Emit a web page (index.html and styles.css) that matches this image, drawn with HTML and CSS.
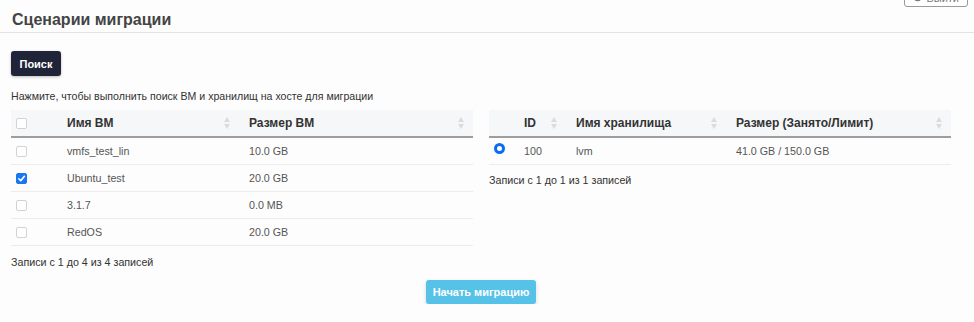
FILE: index.html
```html
<!DOCTYPE html>
<html lang="ru">
<head>
    <meta charset="UTF-8">
    <meta name="viewport" content="width=device-width, initial-scale=1.0">
    <title>Сценарии миграции</title>
    <link rel="stylesheet" href="styles.css">
</head>
<body>
    <!-- Page Header -->
    <div class="page-header">
        <h2>Сценарии миграции</h2>
        <button type="button" class="btn-logout">
            <svg width="9" height="9" viewBox="0 0 10 10"><circle cx="5" cy="5" r="3.6" fill="none" stroke="#777" stroke-width="1.4"/></svg>
            Выйти
        </button>
    </div>

    <div class="content">
        <button type="button" class="btn-search">Поиск</button>
        <p class="hint">Нажмите, чтобы выполнить поиск ВМ и хранилищ на хосте для миграции</p>

        <div class="tables">
            <!-- VM list -->
            <div class="table-block">
                <table class="data-table">
                    <colgroup>
                        <col style="width: 46px">
                        <col style="width: 182px">
                        <col>
                    </colgroup>
                    <thead>
                        <tr>
                            <th><span class="cb"></span></th>
                            <th><div class="th-inner">Имя ВМ <span class="sort"></span></div></th>
                            <th><div class="th-inner">Размер ВМ <span class="sort"></span></div></th>
                        </tr>
                    </thead>
                    <tbody>
                        <tr>
                            <td><span class="cb"></span></td>
                            <td>vmfs_test_lin</td>
                            <td>10.0 GB</td>
                        </tr>
                        <tr>
                            <td><span class="cb checked"><svg width="9" height="9" viewBox="0 0 10 10"><path d="M2 5.3 L4.2 7.5 L8.2 2.6" fill="none" stroke="#fff" stroke-width="1.8" stroke-linecap="round" stroke-linejoin="round"/></svg></span></td>
                            <td>Ubuntu_test</td>
                            <td>20.0 GB</td>
                        </tr>
                        <tr>
                            <td><span class="cb"></span></td>
                            <td>3.1.7</td>
                            <td>0.0 MB</td>
                        </tr>
                        <tr>
                            <td><span class="cb"></span></td>
                            <td>RedOS</td>
                            <td>20.0 GB</td>
                        </tr>
                    </tbody>
                </table>
                <div class="info">Записи с 1 до 4 из 4 записей</div>
            </div>

            <!-- Storage list -->
            <div class="table-block">
                <table class="data-table">
                    <colgroup>
                        <col style="width: 25px">
                        <col style="width: 52px">
                        <col style="width: 160px">
                        <col>
                    </colgroup>
                    <thead>
                        <tr>
                            <th></th>
                            <th><div class="th-inner">ID <span class="sort"></span></div></th>
                            <th><div class="th-inner">Имя хранилища <span class="sort"></span></div></th>
                            <th><div class="th-inner">Размер (Занято/Лимит) <span class="sort"></span></div></th>
                        </tr>
                    </thead>
                    <tbody>
                        <tr>
                            <td class="radio-cell"><span class="radio"></span></td>
                            <td>100</td>
                            <td>lvm</td>
                            <td>41.0 GB / 150.0 GB</td>
                        </tr>
                    </tbody>
                </table>
                <div class="info info-short">Записи с 1 до 1 из 1 записей</div>
            </div>
        </div>

        <div class="actions">
            <button type="button" class="btn-migrate">Начать миграцию</button>
        </div>
    </div>
</body>
</html>
```

FILE: styles.css
```css
/* General Styling */
body {
    font-family: 'Liberation Sans', Arial, sans-serif;
    background: #fdfdfd;
    margin: 0;
    padding: 0;
    color: #333;
    overflow: hidden;
}
.page-header {
    display: flex;
    justify-content: space-between;
    align-items: flex-end;
    height: 32px;
    border-bottom: 1px solid #e3e3e3;
    padding: 0 6px 0 12px;
}
.page-header h2 {
    margin: 0 0 3px;
    font-size: 16px;
    font-weight: bold;
    color: #444;
}
.btn-logout {
    align-self: flex-start;
    margin-top: -12px;
    height: 19px;
    padding: 0 8px;
    background: #fff;
    border: 1px solid #9a9a9a;
    border-radius: 3px;
    font-family: inherit;
    font-size: 11px;
    color: #777;
    display: flex;
    align-items: center;
    gap: 4px;
}
.content {
    padding: 18px 23px 0 11px;
}
.btn-search {
    display: block;
    width: 50px;
    height: 25px;
    padding: 0;
    background: #1f2438;
    color: #fff;
    border: none;
    border-radius: 3px;
    font-family: inherit;
    font-size: 11px;
    font-weight: bold;
    box-shadow: 0 1px 3px rgba(0, 0, 0, 0.25);
}
.hint {
    margin: 13px 0 7px;
    font-size: 10.6px;
    line-height: 14px;
    color: #333;
}
.tables {
    display: grid;
    grid-template-columns: 462px 462px;
    column-gap: 16px;
}
.data-table {
    width: 100%;
    border-collapse: collapse;
    table-layout: fixed;
    font-size: 10.7px;
}
.data-table th {
    background: #f6f7f9;
    height: 26px;
    padding: 0 8px 0 10px;
    text-align: left;
    font-size: 12px;
    font-weight: bold;
    color: #333;
    border-bottom: 2px solid #9d9d9d;
}
.data-table th:first-child {
    padding-left: 5px;
}
.th-inner {
    display: flex;
    justify-content: space-between;
    align-items: center;
}
.sort {
    width: 7px;
    height: 12px;
    display: inline-block;
    position: relative;
}
.sort::before,
.sort::after {
    content: "";
    position: absolute;
    left: 0;
    border-left: 3.5px solid transparent;
    border-right: 3.5px solid transparent;
}
.sort::before {
    top: 0;
    border-bottom: 5px solid #dcdcdc;
}
.sort::after {
    bottom: 0;
    border-top: 5px solid #dcdcdc;
}
.data-table td {
    height: 26px;
    padding: 0 8px 0 10px;
    color: #555;
    border-bottom: 1px solid #ececec;
    white-space: nowrap;
}
.data-table td:first-child {
    padding-left: 5px;
}
.cb {
    display: flex;
    align-items: center;
    justify-content: center;
    width: 9px;
    height: 9px;
    border: 1px solid #d3d3d3;
    border-radius: 2px;
    background: #fff;
}
.cb.checked {
    background: #1877f2;
    border-color: #1877f2;
}
.radio-cell {
    vertical-align: middle;
}
.radio {
    display: block;
    width: 5px;
    height: 5px;
    margin-top: -5px;
    border: 3px solid #0a6cf5;
    border-radius: 50%;
    background: #fff;
}
.info {
    margin-top: 9px;
    font-size: 10.7px;
    line-height: 14px;
    color: #333;
}
.info-short {
    margin-top: 8px;
}
.actions {
    display: flex;
    justify-content: center;
    margin-top: 11px;
}
.btn-migrate {
    width: 110px;
    height: 24px;
    padding: 0;
    background: #56c2e7;
    color: #fff;
    border: none;
    border-radius: 3px;
    font-family: inherit;
    font-size: 11px;
    font-weight: bold;
    box-shadow: 0 2px 4px rgba(0, 0, 0, 0.15);
}
```
